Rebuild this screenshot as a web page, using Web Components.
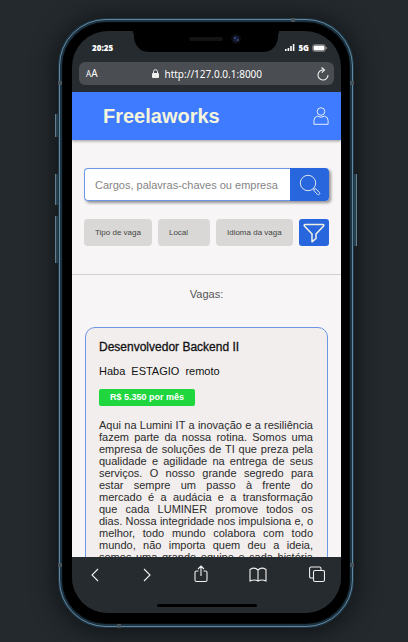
<!DOCTYPE html>
<html lang="pt-BR">
<head>
<meta charset="utf-8">
<meta name="viewport" content="width=device-width, initial-scale=1">
<title>Freelaworks</title>
<style>
  html, body { margin: 0; height: 100%; }
  body {
    font-family: "Liberation Sans", Arial, sans-serif;
    background: #24292d;
    overflow: hidden;
  }
</style>
</head>
<body>
<phone-frame>
  <status-bar slot="top" time="20:25" network="5G"></status-bar>
  <address-bar slot="top" url="http://127.0.0.1:8000"></address-bar>
  <site-header>Freelaworks</site-header>
  <job-search placeholder="Cargos, palavras-chaves ou empresa"></job-search>
  <filter-row>
    <filter-chip>Tipo de vaga</filter-chip>
    <filter-chip>Local</filter-chip>
    <filter-chip>Idioma da vaga</filter-chip>
  </filter-row>
  <job-list heading="Vagas:">
    <job-card>
      <span slot="title">Desenvolvedor Backend II</span>
      <span slot="meta">Haba</span>
      <span slot="meta">ESTAGIO</span>
      <span slot="meta">remoto</span>
      <span slot="salary">R$ 5.350 por mês</span>
      Aqui na Lumini IT a inovação e a resiliência fazem parte da nossa rotina. Somos uma empresa de soluções de TI que preza pela qualidade e agilidade na entrega de seus serviços. O nosso grande segredo para estar sempre um passo à frente do mercado é a audácia e a transformação que cada LUMINER promove todos os dias. Nossa integridade nos impulsiona e, o melhor, todo mundo colabora com todo mundo, não importa quem deu a ideia, somos uma grande equipe e cada história conta.
    </job-card>
  </job-list>
  <browser-toolbar slot="bottom"></browser-toolbar>
</phone-frame>

<script>
const define = (name, html, setup) => customElements.define(name, class extends HTMLElement {
  connectedCallback() {
    if (this.shadowRoot) return;
    const root = this.attachShadow({ mode: 'open' });
    root.innerHTML = html;
    if (setup) setup(this, root);
  }
});

define('phone-frame', `
<style>
  :host { display: block; box-sizing: border-box; height: 100%; padding: 18px 54px 14px 58px; }
  .body { position: relative; box-sizing: border-box; height: 100%; padding: 9px 9px 11px 10px; border-radius: 48px;
    border: 4px solid #1d3341; background: #000;
    box-shadow: inset 0 0 0 1px #05090b, 0 2px 24px 2px #0f1316; }
  .rim { position: absolute; inset: -3px; border: 1px solid #6288a0; border-radius: 47px; pointer-events: none; }
  .side { position: absolute; width: 3px; box-sizing: border-box; background: #29414f; border-left: 1px solid #62808f; }
  .s1 { left: -7px; top: 92px; height: 23px; }
  .s2 { left: -7px; top: 152px; height: 31px; }
  .s3 { left: -7px; top: 194px; height: 47px; }
  .s4 { right: -7px; top: 152px; height: 72px; border-left: 0; border-right: 1px solid #62808f; }
  .seam { position: absolute; background: #46535b; width: 4px; height: 4px; }
  .a { left: -4px; top: 59px; } .b { right: -4px; top: 59px; }
  .c { left: -4px; bottom: 57px; } .d { right: -4px; bottom: 57px; }
  .e { right: 55px; top: -4px; } .f { left: 55px; bottom: -4px; }
  .screen { display: flex; flex-direction: column; height: 100%; overflow: hidden; background: #262b2f;
    border-radius: 36px; }
  .page { flex: 1; min-height: 0; overflow: hidden; background: #f7f5f6; }
  .notch { position: absolute; top: 8px; left: 50%; margin-left: -73px; width: 146px; height: 22px; }
</style>
<div class="body">
  <i class="side s1"></i><i class="side s2"></i><i class="side s3"></i><i class="side s4"></i>
  <div class="screen"><slot name="top"></slot><main class="page"><slot></slot></main><slot name="bottom"></slot></div>
  <svg class="notch" viewBox="0 0 146 22" aria-hidden="true">
    <path d="M-4 0H150V1Q145 1 145 6V8Q143 22 129 22H17Q3 22 1 8V6Q1 1 -4 1Z" fill="#000"/>
    <rect x="56" y="7" width="34" height="4" rx="2" fill="#111315"/>
    <circle cx="103" cy="9" r="5" fill="#0c0d12"/><circle cx="103" cy="9" r="3" fill="#171c3c"/>
    <circle cx="102" cy="8" r="1" fill="#3d4f8e"/><circle cx="105" cy="10" r="1" fill="#315173"/>
  </svg>
  <div class="rim"></div>
  <i class="seam a"></i><i class="seam b"></i><i class="seam c"></i><i class="seam d"></i><i class="seam e"></i><i class="seam f"></i>
</div>`);

define('status-bar', `
<style>
  :host { display: flex; flex: none; justify-content: space-between; align-items: center; height: 31px; box-sizing: border-box;
    padding: 2px 14px 0 20px; color: #fff; font: 800 8px/12px "Open Sans", sans-serif; }
  .right { display: flex; align-items: center; gap: 3px; }
  svg { display: block; }
</style>
<span class="time"></span>
<span class="right">
  <svg width="10" height="7" viewBox="0 0 10 7" fill="#fff" aria-hidden="true"><path d="M0 5h1.6v2H0zM2.6 4h1.6v3H2.6zM5.2 2h1.6v5H5.2zM7.8 0h1.6v7H7.8z"/></svg>
  <span class="net"></span>
  <svg width="15" height="8" viewBox="0 0 15 8" aria-hidden="true"><rect x=".5" y=".5" width="13" height="7" rx="2" fill="none" stroke="#6d7174"/><rect x="1.5" y="1.5" width="11" height="5" rx="1" fill="#fff"/><path d="M14.5 3v2" stroke="#85898c"/></svg>
</span>`, (h, r) => {
  r.querySelector('.time').textContent = h.getAttribute('time');
  r.querySelector('.net').textContent = h.getAttribute('network');
});

define('address-bar', `
<style>
  :host { display: block; flex: none; padding: 0 7px 7px; }
  .bar { display: flex; align-items: center; justify-content: space-between; height: 23px; padding: 0 5px 0 7px; border-radius: 6px;
    background: #4a4d51; color: #fff; font: 10px/14px "Noto Sans", sans-serif; }
  button { all: unset; display: flex; align-items: baseline; color: #fff; }
  small { font-size: 8px; }
  .url { display: flex; align-items: center; gap: 5px; }
  svg { display: block; }
</style>
<div class="bar">
  <button aria-label="Tamanho do texto"><small>A</small><span>A</span></button>
  <span class="url"><svg width="7" height="9" viewBox="0 0 7 9" aria-hidden="true"><rect y="4" width="7" height="5" rx="1" fill="#eee"/><path d="M1.5 4.5V2.7a2 2 0 0 1 4 0v1.8" fill="none" stroke="#eee"/></svg><span class="text"></span></span>
  <button aria-label="Recarregar"><svg width="12" height="14" viewBox="0 0 12 14" fill="none" stroke="#f2f2f2" stroke-width="1.1" aria-hidden="true"><path d="M6.5 3A5 5 0 1 0 11 8M4.5 .5L7.5 3L4.8 5.7"/></svg></button>
</div>`, (h, r) => { r.querySelector('.text').textContent = h.getAttribute('url'); });

define('site-header', `
<style>
  :host { display: flex; align-items: center; justify-content: space-between; position: relative; height: 48px; padding: 0 12px 0 31px;
    background: #3f7bff; box-shadow: 0 1px 3px #0006; }
  h1 { margin: 0; font-size: 20px; line-height: 24px; color: #f5f5dc; }
  button { all: unset; }
  svg { display: block; }
</style>
<h1><slot></slot></h1>
<button aria-label="Perfil"><svg width="16" height="18" viewBox="0 0 16 18" fill="none" stroke="#e4ecf5" aria-hidden="true"><circle cx="8" cy="4.5" r="3.8"/><path d="M.9 17.3V13.5Q.9 9.8 4.5 9.2Q8 11.3 11.5 9.2Q15.1 9.8 15.1 13.5V17.3Z"/></svg></button>`);

define('job-search', `
<style>
  :host { display: block; padding: 28px 12px 0; }
  form { display: flex; height: 33px; border-radius: 4px; box-shadow: 2px 2px 3px #0006; }
  input { flex: 1; min-width: 0; box-sizing: border-box; margin: 0; padding: 1px 10px 0; border: 1px solid #6b97e6; border-right: 0;
    border-radius: 4px 0 0 4px; background: #fff; font: 11px/14px "Liberation Sans", Arial, sans-serif; color: #333; outline: none; }
  input::placeholder { color: #858585; opacity: 1; }
  button { display: grid; place-items: center; width: 39px; padding: 0; border: 0; border-radius: 0 4px 4px 0; background: #2866de; }
</style>
<form role="search"><input type="text"><button type="button" aria-label="Buscar">
<svg width="22" height="22" viewBox="0 0 22 22" fill="none" stroke="#dce4ed" aria-hidden="true"><circle cx="9" cy="9" r="7.7"/><path d="M14.4 14.4l1.3 1.3M14.4 16l1.7-1.7 4.3 4q1 1-.1 2-1 1-2 0z"/></svg></button></form>`, (h, r) => {
  const i = r.querySelector('input');
  i.placeholder = h.getAttribute('placeholder');
  i.setAttribute('aria-label', i.placeholder);
});

define('filter-row', `
<style>
  :host { display: flex; gap: 6px; padding: 18px 12px 28px; border-bottom: 1px solid #d2d0d1; }
  .apply { display: grid; place-items: center; margin-left: auto; width: 31px; height: 27px; padding: 0; border: 0; border-radius: 3px; background: #2866de; }
</style>
<slot></slot>
<button class="apply" aria-label="Filtrar"><svg width="22" height="20" viewBox="0 0 22 20" fill="none" stroke="#f2f2e4" stroke-width="1.5" stroke-linejoin="round" aria-hidden="true"><path d="M2 1.5H20Q21.2 1.5 20.6 3L13 11V15.5L9 18.8V11L1.4 3Q.8 1.5 2 1.5Z"/></svg></button>`);

define('filter-chip', `
<style>
  :host { display: block; }
  button { box-sizing: border-box; height: 27px; margin: 0; padding: 1px 11px 0; border: 0; border-radius: 4px; background: #d9d8d6;
    color: #454545; font: 8px/12px "Liberation Sans", Arial, sans-serif; white-space: nowrap; text-align: left; min-width: 52px; }
</style>
<button><slot></slot></button>`);

define('job-list', `
<style>
  :host { display: block; padding: 11px 13px; }
  h2 { margin: 0 0 25px; text-align: center; font-weight: normal; font-size: 11px; line-height: 16px; color: #555; }
</style>
<h2></h2><slot></slot>`, (h, r) => { r.querySelector('h2').textContent = h.getAttribute('heading'); });

define('job-card', `
<style>
  :host { display: block; padding: 11px 14px 16px 13px; border: 1px solid #6b97e6; border-radius: 10px; background: #f1eeed; }
  h3 { margin: 0; font-weight: normal; font-size: 12px; line-height: 16px; color: #111; -webkit-text-stroke: .3px #111; }
  .meta { display: flex; gap: 6px; margin-top: 9px; font-size: 11px; line-height: 14px; color: #111; }
  .salary { display: block; width: fit-content; margin-top: 11px; padding: 0 11px; border-radius: 2px; background: #1fd63f; color: #fff; font-size: 9px; font-weight: bold; line-height: 17px; }
  p { margin: 13px 0 0; font-size: 11px; line-height: 12px; text-align: justify; color: #2b2b2b; }
</style>
<h3><slot name="title"></slot></h3>
<div class="meta"><slot name="meta"></slot></div>
<div class="salary"><slot name="salary"></slot></div>
<p><slot></slot></p>`);

define('browser-toolbar', `
<style>
  :host { display: block; flex: none; height: 56px; background: #262b2f; position: relative; }
  nav { display: flex; justify-content: space-between; align-items: center; padding: 8px 16px 0 18px; }
  button { all: unset; }
  svg { display: block; fill: none; stroke: #f0f0f0; stroke-width: 1.1; }
  .home { width: 100px; height: 3px; border-radius: 2px; background: #000; margin: 21px auto 0; }
</style>
<nav>
  <button aria-label="Voltar"><svg width="10" height="18" viewBox="0 0 10 18"><path d="M8 4L2 10L8 16"/></svg></button>
  <button aria-label="Avançar"><svg width="10" height="18" viewBox="0 0 10 18"><path d="M2 4L8 10L2 16"/></svg></button>
  <button aria-label="Compartilhar"><svg width="14" height="18" viewBox="0 0 14 18"><path d="M4.5 6H2.5Q1 6 1 7.5V15Q1 16.5 2.5 16.5H11.5Q13 16.5 13 15V7.5Q13 6 11.5 6H9.5M7 11V1M4 4L7 1L10 4"/></svg></button>
  <button aria-label="Favoritos"><svg width="18" height="18" viewBox="0 0 18 18"><path d="M9 5Q5.5 1.5 1 4.5V16Q5.5 14 9 16Q12.5 14 17 16V4.5Q12.5 1.5 9 5ZM9 5V16"/></svg></button>
  <button aria-label="Abas"><svg width="16" height="18" viewBox="0 0 16 18"><rect x="4.5" y="5.5" width="11" height="11" rx="1.5"/><path d="M4 13H2Q.6 13 .6 11.5V3.5Q.6 2 2 2H10.5Q12 2 12 3.5V5.5"/></svg></button>
</nav>
<div class="home"></div>`);
</script>
</body>
</html>
